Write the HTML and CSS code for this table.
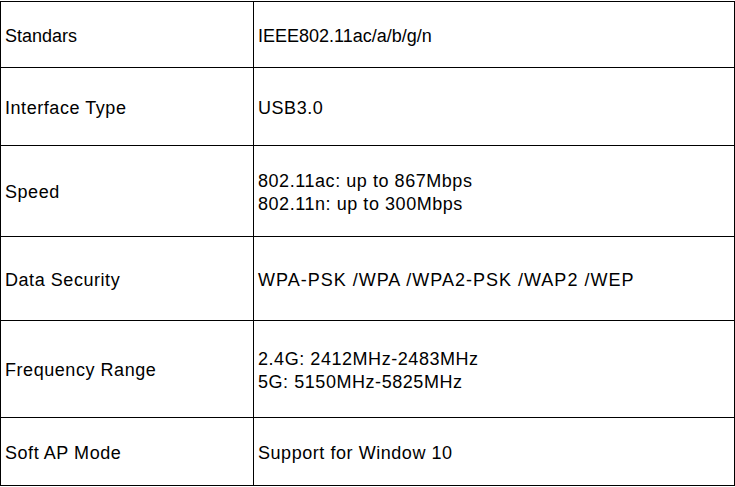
FILE: index.html
```html
<!DOCTYPE html>
<html lang="en">
<head>
<meta charset="utf-8">
<title>Specifications</title>
<link rel="stylesheet" href="styles.css">
</head>
<body>
<table class="spec">
  <colgroup><col class="c1"><col class="c2"></colgroup>
  <tbody>
    <tr class="r1"><td class="tight">Standars</td><td class="tight">IEEE802.11ac/a/b/g/n</td></tr>
    <tr class="r2"><td>Interface Type</td><td>USB3.0</td></tr>
    <tr class="r3"><td>Speed</td><td>802.11ac: up to 867Mbps<br>802.11n: up to 300Mbps</td></tr>
    <tr class="r4"><td>Data Security</td><td class="wide">WPA-PSK /WPA /WPA2-PSK /WAP2 /WEP</td></tr>
    <tr class="r5"><td>Frequency Range</td><td>2.4G: 2412MHz-2483MHz<br>5G: 5150MHz-5825MHz</td></tr>
    <tr class="r6"><td>Soft AP Mode</td><td>Support for Window 10</td></tr>
  </tbody>
</table>
</body>
</html>
```
FILE: styles.css
```css
html, body {
  margin: 0;
  padding: 0;
  background: #fff;
}
body {
  padding-top: 1px;
  font-family: "Liberation Sans", Arial, sans-serif;
  font-size: 18px;
  color: #000;
}
.spec {
  border-collapse: collapse;
  table-layout: fixed;
  width: 734px;
}
.c1 { width: 253px; }
.c2 { width: 481px; }
.spec td {
  border: 1px solid #000;
  padding: 3px 3px 0 4px;
  line-height: 23px;
  vertical-align: middle;
  letter-spacing: 0.55px;
}
.spec td.tight { letter-spacing: 0; }
.spec td.wide { letter-spacing: 1px; }
.r1 { height: 66px; }
.r2 { height: 78px; }
.r3 { height: 91px; }
.r4 { height: 84px; }
.r5 { height: 97px; }
.r6 { height: 68px; }
```
